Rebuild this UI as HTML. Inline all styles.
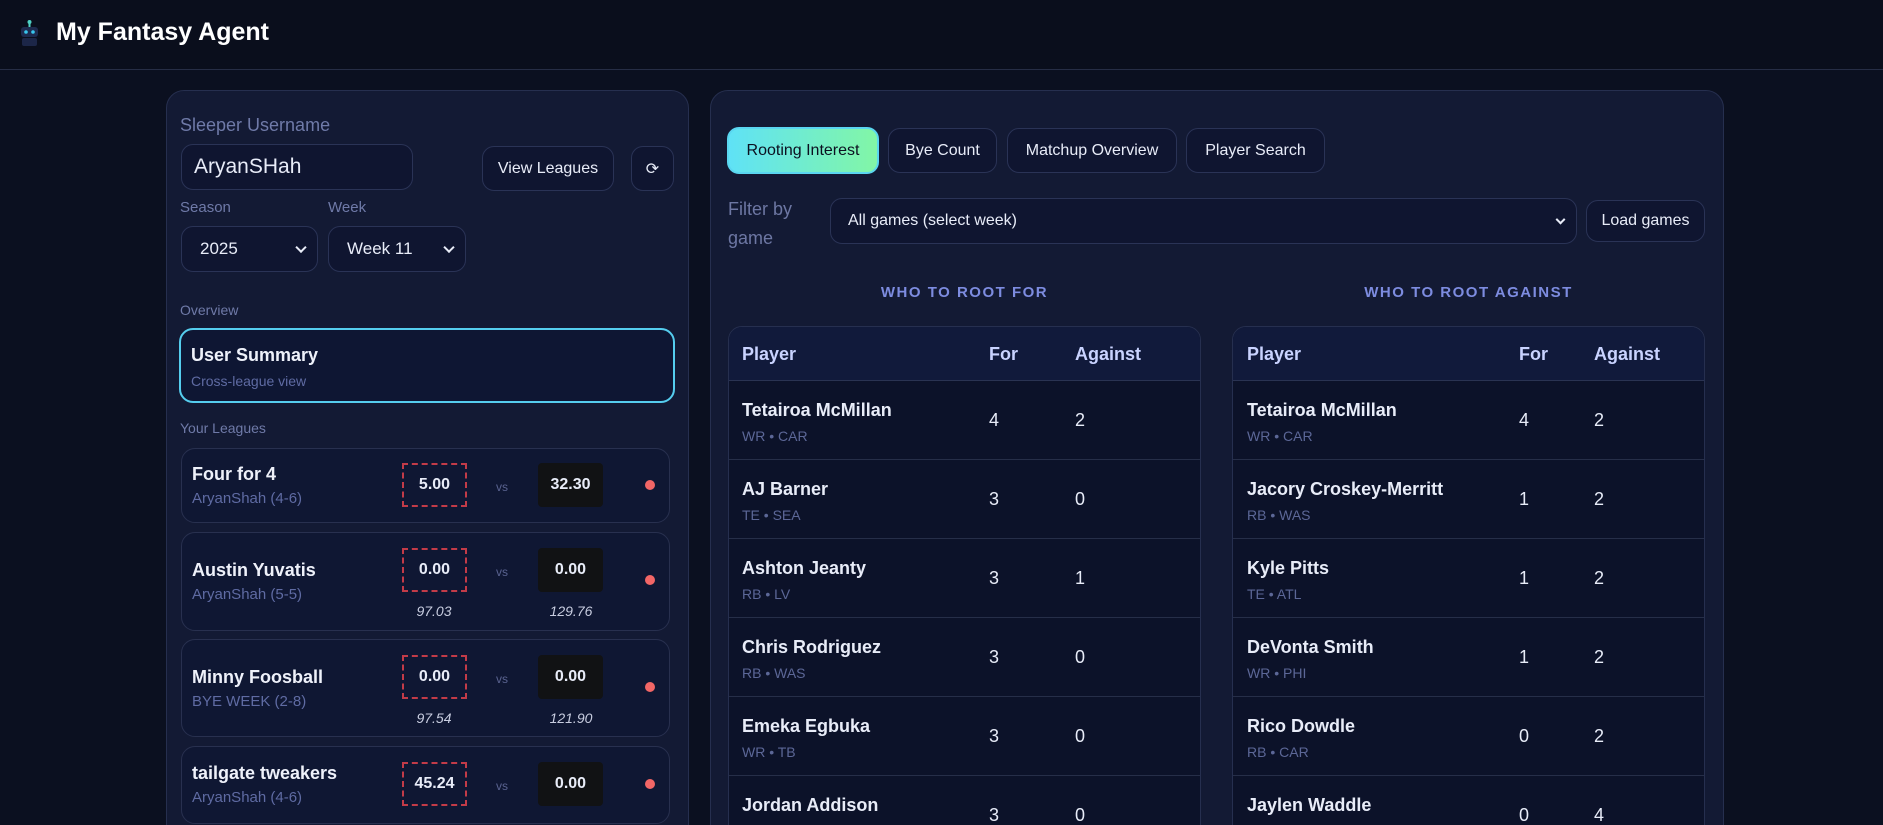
<!DOCTYPE html>
<html><head><meta charset="utf-8"><style>
*{box-sizing:border-box;margin:0;padding:0}
html{width:1883px;height:825px;overflow:hidden;background:#0b1020}
body{width:1883px;height:825px;overflow:hidden;background:#0b1020;font-family:"Liberation Sans",sans-serif;color:#e8ecf8;position:relative}
.a{position:absolute}
.hdr{left:0;top:0;width:1883px;height:70px;background:#0a0e1c;border-bottom:1px solid #262d45}
.panel{background:#131a34;border:1px solid #262f4f;border-radius:18px}
.lbl{color:#6f7aa8}
.box{border:1px solid #2a3356;border-radius:12px;background:#121a35}
.btn{border:1px solid #2a3356;border-radius:12px;background:#0f1530;color:#e8ecf8;font-size:16px;display:flex;align-items:center;justify-content:center}
.sel{border:1px solid #2a3356;border-radius:12px;background:#0f1530;font-size:17px;display:flex;align-items:center;padding-left:18px}
.chev{position:absolute;right:12px;top:50%;width:8px;height:8px;border-right:2px solid #e8ecf8;border-bottom:2px solid #e8ecf8;transform:translateY(-70%) rotate(45deg)}
.card{left:181px;width:489px;border:1px solid #28304f;border-radius:14px;background:#0f1733}
.nm{font-weight:bold;font-size:18px;color:#eef1fa}
.sub{font-size:15px;color:#5f6ba3}
.sc{width:65px;height:44px;border:2px dashed #c23b48;display:flex;align-items:center;justify-content:center;font-weight:bold;font-size:16px}
.sc2{width:65px;height:44px;background:#111214;border-radius:4px;display:flex;align-items:center;justify-content:center;font-weight:bold;font-size:16px}
.vs{font-size:12px;color:#5a6390}
.dot{width:10px;height:10px;border-radius:50%;background:#f26666}
.it{font-style:italic;font-size:14px;color:#c8cde0;width:80px;text-align:center}
.tbl{border:1px solid #262f4f;border-radius:14px;overflow:hidden;background:#0c1229}
.th{height:54px;background:#111a3b;border-bottom:1px solid #2a3352;position:relative;font-weight:bold;font-size:18px;color:#c9d3ff}
.tr{height:79px;border-bottom:1px solid #262e48;position:relative;background:#0c1229}
.tr .n{position:absolute;top:19px;font-weight:bold;font-size:18px}
.tr .s{position:absolute;top:47px;font-size:14px;color:#5c6797}
.tr .v{position:absolute;top:29px;font-size:18px}
.th span{position:absolute;top:17px}
.h2{font-weight:bold;font-size:15px;color:#7d8ce0;letter-spacing:1.5px;text-align:center}
</style></head><body>
<div class="a hdr"></div>
<svg class="a" style="left:18px;top:18px" width="24" height="30" viewBox="0 0 24 30">
<rect x="10.5" y="4" width="2" height="6" fill="#4fd1c5"/><circle cx="11.5" cy="4" r="2" fill="#4fd1c5"/>
<rect x="3" y="9" width="17" height="10" rx="3" fill="#1e2a4f"/>
<circle cx="8" cy="14" r="1.8" fill="#38c7ee"/><circle cx="15" cy="14" r="1.8" fill="#38c7ee"/>
<rect x="4" y="20" width="15" height="8" rx="2" fill="#1c2648"/></svg>
<div class="a" style="left:56px;top:18px;font-size:25px;font-weight:bold;color:#fff">My Fantasy Agent</div>

<div class="a panel" style="left:166px;top:90px;width:523px;height:800px"></div>
<div class="a lbl" style="left:180px;top:115px;font-size:18px">Sleeper Username</div>
<div class="a sel" style="left:181px;top:144px;width:232px;height:46px;font-size:21px;padding-left:12px">AryanSHah</div>
<div class="a btn" style="left:482px;top:146px;width:132px;height:45px">View Leagues</div>
<div class="a btn" style="left:631px;top:146px;width:43px;height:45px;font-size:16px">⟳</div>
<div class="a lbl" style="left:180px;top:199px;font-size:15px">Season</div>
<div class="a lbl" style="left:328px;top:199px;font-size:15px">Week</div>
<div class="a sel" style="left:181px;top:226px;width:137px;height:46px">2025<span class="chev"></span></div>
<div class="a sel" style="left:328px;top:226px;width:138px;height:46px">Week 11<span class="chev"></span></div>
<div class="a lbl" style="left:180px;top:302px;font-size:14px">Overview</div>
<div class="a" style="left:179px;top:328px;width:496px;height:75px;border:2px solid #55cdee;border-radius:14px;background:#0e1633"></div>
<div class="a nm" style="left:191px;top:345px">User Summary</div>
<div class="a sub" style="left:191px;top:373px;font-size:14px">Cross-league view</div>
<div class="a lbl" style="left:180px;top:420px;font-size:14px">Your Leagues</div>

<div class="a card" style="top:448px;height:75px"></div>
<div class="a nm" style="left:192px;top:464px">Four for 4</div>
<div class="a sub" style="left:192px;top:490px">AryanShah (4-6)</div>
<div class="a sc" style="left:402px;top:463px">5.00</div>
<div class="a vs" style="left:496px;top:480px">vs</div>
<div class="a sc2" style="left:538px;top:463px">32.30</div>
<div class="a dot" style="left:645px;top:480px"></div>

<div class="a card" style="top:532px;height:99px"></div>
<div class="a nm" style="left:192px;top:560px">Austin Yuvatis</div>
<div class="a sub" style="left:192px;top:586px">AryanShah (5-5)</div>
<div class="a sc" style="left:402px;top:548px">0.00</div>
<div class="a vs" style="left:496px;top:565px">vs</div>
<div class="a sc2" style="left:538px;top:548px">0.00</div>
<div class="a dot" style="left:645px;top:575px"></div>
<div class="a it" style="left:394px;top:603px">97.03</div>
<div class="a it" style="left:531px;top:603px">129.76</div>

<div class="a card" style="top:639px;height:98px"></div>
<div class="a nm" style="left:192px;top:667px">Minny Foosball</div>
<div class="a sub" style="left:192px;top:693px">BYE WEEK (2-8)</div>
<div class="a sc" style="left:402px;top:655px">0.00</div>
<div class="a vs" style="left:496px;top:672px">vs</div>
<div class="a sc2" style="left:538px;top:655px">0.00</div>
<div class="a dot" style="left:645px;top:682px"></div>
<div class="a it" style="left:394px;top:710px">97.54</div>
<div class="a it" style="left:531px;top:710px">121.90</div>

<div class="a card" style="top:746px;height:78px"></div>
<div class="a nm" style="left:192px;top:763px">tailgate tweakers</div>
<div class="a sub" style="left:192px;top:789px">AryanShah (4-6)</div>
<div class="a sc" style="left:402px;top:762px">45.24</div>
<div class="a vs" style="left:496px;top:779px">vs</div>
<div class="a sc2" style="left:538px;top:762px">0.00</div>
<div class="a dot" style="left:645px;top:779px"></div>

<div class="a panel" style="left:710px;top:90px;width:1014px;height:800px"></div>
<div class="a btn" style="left:727px;top:127px;width:152px;height:47px;background:linear-gradient(90deg,#5fe2f6,#82f6a6);border:2px solid #5ad6f0;color:#0b1020">Rooting Interest</div>
<div class="a btn" style="left:888px;top:128px;width:109px;height:45px">Bye Count</div>
<div class="a btn" style="left:1007px;top:128px;width:170px;height:45px">Matchup Overview</div>
<div class="a btn" style="left:1186px;top:128px;width:139px;height:45px">Player Search</div>
<div class="a lbl" style="left:728px;top:195px;font-size:18px;line-height:29px;color:#6d77a3">Filter by<br>game</div>
<div class="a sel" style="left:830px;top:198px;width:747px;height:46px;font-size:16px;padding-left:17px">All games (select week)<span class="chev" style="width:7px;height:7px"></span></div>
<div class="a btn" style="left:1586px;top:200px;width:119px;height:42px">Load games</div>
<div class="a h2" style="left:728px;top:284px;width:473px">WHO TO ROOT FOR</div>
<div class="a h2" style="left:1232px;top:284px;width:473px">WHO TO ROOT AGAINST</div>

<div class="a tbl" style="left:728px;top:326px;width:473px;height:560px">
<div class="th"><span style="left:13px">Player</span><span style="left:260px">For</span><span style="left:346px">Against</span></div>
<div class="tr"><div class="n" style="left:13px">Tetairoa McMillan</div><div class="s" style="left:13px">WR • CAR</div><div class="v" style="left:260px">4</div><div class="v" style="left:346px">2</div></div>
<div class="tr"><div class="n" style="left:13px">AJ Barner</div><div class="s" style="left:13px">TE • SEA</div><div class="v" style="left:260px">3</div><div class="v" style="left:346px">0</div></div>
<div class="tr"><div class="n" style="left:13px">Ashton Jeanty</div><div class="s" style="left:13px">RB • LV</div><div class="v" style="left:260px">3</div><div class="v" style="left:346px">1</div></div>
<div class="tr"><div class="n" style="left:13px">Chris Rodriguez</div><div class="s" style="left:13px">RB • WAS</div><div class="v" style="left:260px">3</div><div class="v" style="left:346px">0</div></div>
<div class="tr"><div class="n" style="left:13px">Emeka Egbuka</div><div class="s" style="left:13px">WR • TB</div><div class="v" style="left:260px">3</div><div class="v" style="left:346px">0</div></div>
<div class="tr"><div class="n" style="left:13px">Jordan Addison</div><div class="s" style="left:13px">WR • MIN</div><div class="v" style="left:260px">3</div><div class="v" style="left:346px">0</div></div>
</div>

<div class="a tbl" style="left:1232px;top:326px;width:473px;height:560px">
<div class="th"><span style="left:14px">Player</span><span style="left:286px">For</span><span style="left:361px">Against</span></div>
<div class="tr"><div class="n" style="left:14px">Tetairoa McMillan</div><div class="s" style="left:14px">WR • CAR</div><div class="v" style="left:286px">4</div><div class="v" style="left:361px">2</div></div>
<div class="tr"><div class="n" style="left:14px">Jacory Croskey-Merritt</div><div class="s" style="left:14px">RB • WAS</div><div class="v" style="left:286px">1</div><div class="v" style="left:361px">2</div></div>
<div class="tr"><div class="n" style="left:14px">Kyle Pitts</div><div class="s" style="left:14px">TE • ATL</div><div class="v" style="left:286px">1</div><div class="v" style="left:361px">2</div></div>
<div class="tr"><div class="n" style="left:14px">DeVonta Smith</div><div class="s" style="left:14px">WR • PHI</div><div class="v" style="left:286px">1</div><div class="v" style="left:361px">2</div></div>
<div class="tr"><div class="n" style="left:14px">Rico Dowdle</div><div class="s" style="left:14px">RB • CAR</div><div class="v" style="left:286px">0</div><div class="v" style="left:361px">2</div></div>
<div class="tr"><div class="n" style="left:14px">Jaylen Waddle</div><div class="s" style="left:14px">WR • MIA</div><div class="v" style="left:286px">0</div><div class="v" style="left:361px">4</div></div>
</div>
</body></html>
